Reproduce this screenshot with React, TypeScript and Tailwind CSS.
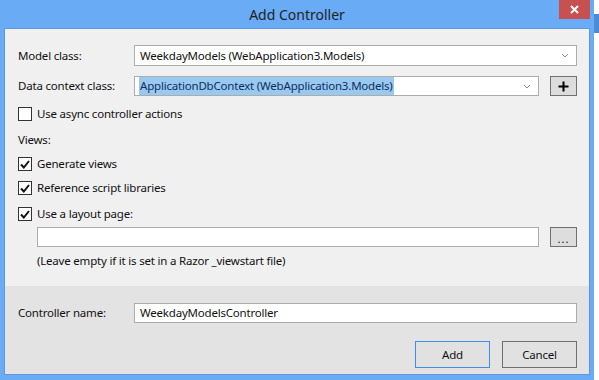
import React from "react";

const font = { fontFamily: '"Segoe UI", "Noto Sans", "Open Sans", sans-serif' };

const Chevron = () => (
  <svg width="8" height="5" viewBox="0 0 8 5" className="shrink-0">
    <path d="M1 1 L4 4 L7 1" fill="none" stroke="#8a8a8a" strokeWidth="1" />
  </svg>
);

const Check = ({ checked }: { checked?: boolean }) => (
  <div className="w-[14px] h-[14px] border border-[#333333] bg-white flex items-center justify-center shrink-0">
    {checked && (
      <svg width="10" height="9" viewBox="0 0 10 9">
        <path d="M1 4.5 L3.8 7.5 L9 1" fill="none" stroke="#111" strokeWidth="2" />
      </svg>
    )}
  </div>
);

const CheckRow = ({ label, checked, className }: { label: string; checked?: boolean; className?: string }) => (
  <div className={`h-[20px] flex items-center gap-[5px] ${className ?? ""}`}>
    <Check checked={checked} />
    <span>{label}</span>
  </div>
);

const SmallButton = ({ children }: { children: React.ReactNode }) => (
  <div className="w-[27px] h-[20px] border border-[#707070] bg-[#dddddd] flex items-center justify-center shrink-0">
    {children}
  </div>
);

export default function App() {
  return (
    <div className="w-[599px] h-[380px] flex bg-white overflow-hidden text-[11.5px] tracking-[-0.2px] text-[#111]" style={font}>
      <div className="w-[594px] h-[380px] bg-[#6aabf5] flex flex-col shrink-0">
        {/* title bar */}
        <div className="h-[28px] relative flex items-center justify-center">
          <span className="text-[14px] tracking-normal text-[#222] pt-[1px]">Add Controller</span>
          <div className="absolute top-0 left-[559px] w-[31px] h-[19px] bg-[#c75050] flex items-center justify-center">
            <svg width="9" height="9" viewBox="0 0 9 9">
              <path d="M1 1 L8 8 M8 1 L1 8" stroke="#fff" strokeWidth="2" />
            </svg>
          </div>
        </div>

        {/* client area */}
        <div className="ml-[4px] w-[586px] h-[347px] border border-[#5b98df] flex flex-col">
          <div className="bg-[#f0f0f0] h-[257px] pt-[16px] pl-[13px] pr-[12px] flex flex-col">
            <div className="h-[21px] flex items-center">
              <span className="w-[116px]">Model class:</span>
              <div className="flex-1 h-[21px] bg-white border border-[#acacac] flex items-center justify-between pl-[5px] pr-[7px]">
                <span>WeekdayModels (WebApplication3.Models)</span>
                <Chevron />
              </div>
            </div>

            <div className="h-[20px] mt-[10px] flex items-center">
              <span className="w-[116px]">Data context class:</span>
              <div className="w-[405px] h-[20px] bg-white border border-[#acacac] flex items-center justify-between pl-[4px] pr-[7px]">
                <span className="bg-[#99c9ef] text-[#0f2f5f] px-[1px]">ApplicationDbContext (WebApplication3.Models)</span>
                <Chevron />
              </div>
              <div className="ml-[11px]">
                <SmallButton>
                  <svg width="11" height="11" viewBox="0 0 11 11">
                    <path d="M5.5 0.5 V10.5 M0.5 5.5 H10.5" stroke="#000" strokeWidth="2" />
                  </svg>
                </SmallButton>
              </div>
            </div>

            <CheckRow label="Use async controller actions" className="mt-[8px]" />

            <div className="h-[20px] mt-[6px] flex items-center">Views:</div>

            <CheckRow label="Generate views" checked className="mt-[4px]" />
            <CheckRow label="Reference script libraries" checked className="mt-[4px]" />
            <CheckRow label="Use a layout page:" checked className="mt-[6px]" />

            <div className="h-[20px] mt-[3px] pl-[19px] flex items-center">
              <div className="w-[502px] h-[20px] bg-white border border-[#acacac]" />
              <div className="ml-[11px]">
                <SmallButton>
                  <span className="text-[11px] leading-none pt-[2px] tracking-[1px]">...</span>
                </SmallButton>
              </div>
            </div>

            <div className="h-[20px] mt-[4px] pl-[19px] flex items-center">
              (Leave empty if it is set in a Razor _viewstart file)
            </div>
          </div>

          <div className="bg-[#e3e3e3] flex-1 pt-[17px] pl-[13px] pr-[12px] flex flex-col">
            <div className="h-[20px] flex items-center">
              <span className="w-[116px]">Controller name:</span>
              <div className="flex-1 h-[20px] bg-white border border-[#acacac] flex items-center pl-[5px]">
                WeekdayModelsController
              </div>
            </div>
            <div className="mt-[18px] flex justify-end gap-[12px]">
              <div className="w-[75px] h-[27px] border border-[#3c8ee8] bg-[#e1e1e1] flex items-center justify-center">Add</div>
              <div className="w-[75px] h-[27px] border border-[#707070] bg-[#e1e1e1] flex items-center justify-center">Cancel</div>
            </div>
          </div>
        </div>
      </div>

      {/* strip of the window behind */}
      <div className="flex-1 flex flex-col">
        <div className="h-[14px] bg-white" />
        <div className="h-[19px] bg-[#4f8ad8]" />
        <div className="flex-1 bg-white" />
      </div>
    </div>
  );
}
